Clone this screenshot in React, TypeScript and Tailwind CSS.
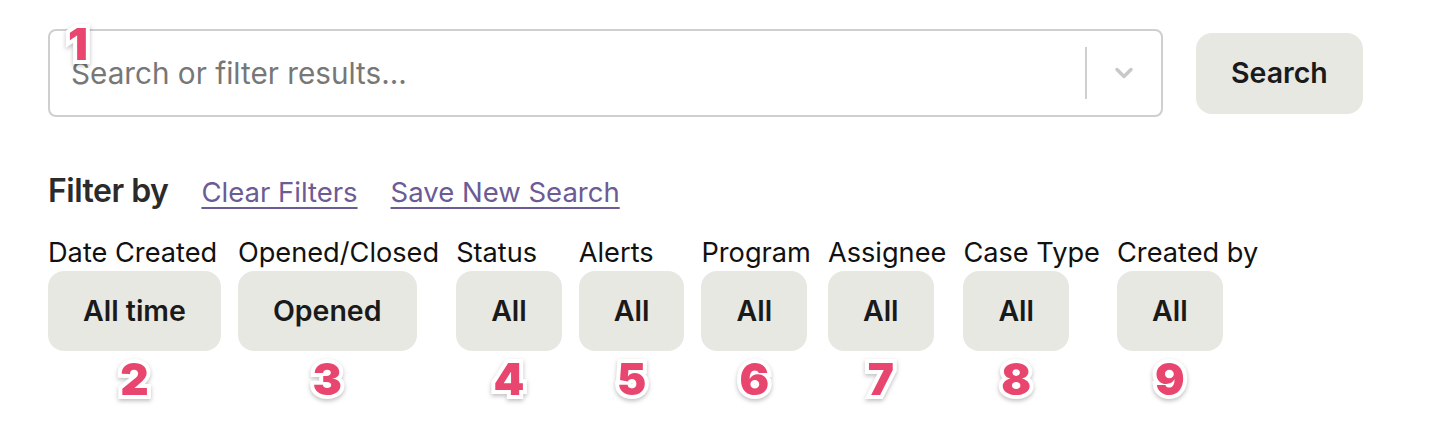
import { ChevronDown } from "lucide-react";

interface Filter {
  label: string;
  value: string;
  step: number;
}

const filters: Filter[] = [
  { label: "Date Created", value: "All time", step: 2 },
  { label: "Opened/Closed", value: "Opened", step: 3 },
  { label: "Status", value: "All", step: 4 },
  { label: "Alerts", value: "All", step: 5 },
  { label: "Program", value: "All", step: 6 },
  { label: "Assignee", value: "All", step: 7 },
  { label: "Case Type", value: "All", step: 8 },
  { label: "Created by", value: "All", step: 9 },
];

// pink step marker with the white outline, like the annotated screenshot
const StepNumber = ({ n, className = "" }: { n: number; className?: string }) => (
  <span
    className={`font-black text-[44px] leading-none text-[#e8466f] [-webkit-text-stroke:8px_white] [paint-order:stroke_fill] drop-shadow-[0_2px_2px_rgba(0,0,0,0.25)] ${className}`}
  >
    {n}
  </span>
);

const App = () => {
  return (
    <main className="w-[1432px] h-[424px] bg-white pl-[48px] pt-[29px] font-['Inter','Liberation_Sans',sans-serif] text-[#111]">
      <div className="flex items-center gap-[33px]">
        <div className="relative flex items-center w-[1115px] h-[88px] border-2 border-[#cfcfcf] rounded-[8px]">
          <input
            type="text"
            placeholder="Search or filter results..."
            className="flex-1 h-full pl-[21px] text-[29.7px] text-[#333] placeholder:text-[#777] outline-none bg-transparent"
          />
          <div className="w-[2px] h-[52px] bg-[#cfcfcf]" />
          <div className="w-[74px] flex justify-center text-[#c8c8c8]">
            <ChevronDown size={28} strokeWidth={3} />
          </div>
          <StepNumber n={1} className="absolute left-[18px] -top-[9px]" />
        </div>
        <button
          type="button"
          className="h-[81px] px-[35px] rounded-[16px] bg-[#e8e8e3] text-[28.5px] font-semibold text-[#1a1a1a]"
        >
          Search
        </button>
      </div>

      <div className="flex items-baseline gap-[33px] mt-[54px] leading-[40px]">
        <h2 className="text-[32px] font-semibold tracking-[-0.5px] text-[#2b2b2b]">
          Filter by
        </h2>
        <a href="#" className="text-[27.5px] text-[#6c5b94] underline underline-offset-[5px]">
          Clear Filters
        </a>
        <a href="#" className="text-[27.5px] text-[#6c5b94] underline underline-offset-[5px]">
          Save New Search
        </a>
      </div>

      <div className="flex gap-[17px] mt-[23px]">
        {filters.map((f) => (
          <div key={f.label} className="flex flex-col items-start">
            <label className="text-[27.2px] leading-[36px] text-[#111]">
              {f.label}
            </label>
            <div className="flex flex-col items-center">
              <button
                type="button"
                className="h-[80px] min-w-[104px] px-[35px] rounded-[16px] bg-[#e8e8e3] text-[28.5px] font-semibold text-[#1a1a1a]"
              >
                {f.value}
              </button>
              <StepNumber n={f.step} className="mt-[6px]" />
            </div>
          </div>
        ))}
      </div>
    </main>
  );
};

export default App;
